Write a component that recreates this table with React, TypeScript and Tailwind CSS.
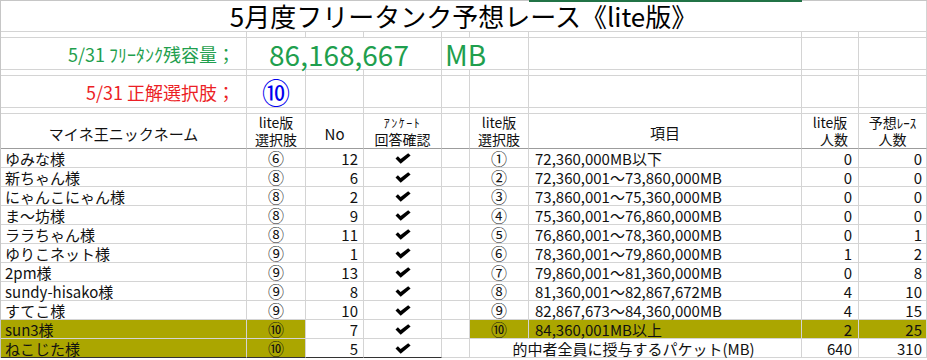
import { twMerge } from 'tailwind-merge';
import type { ReactNode } from 'react';

// Excel-like sheet: 5月度フリータンク予想レース
const FONT = "font-['Noto_Sans_CJK_JP','Noto_Sans_CJK_SC',sans-serif]";
const HL = 'bg-[#aba600]';

function C({ className, children }: { className?: string; children?: ReactNode }) {
  return (
    <div
      className={twMerge(
        'flex items-center overflow-visible whitespace-nowrap border-r border-b border-[#d4d4d4] text-[15px] leading-[19px] text-[#111]',
        className,
      )}
    >
      {children}
    </div>
  );
}

function Check() {
  return (
    <svg width="16" height="11" viewBox="0 0 16 11">
      <path d="M0.5 5.6 L2.9 3.3 L5.6 6.1 L13.2 0.2 L15.6 2.5 L5.7 10.8 Z" fill="#000" />
    </svg>
  );
}

const left: [string, string, string, boolean?][] = [
  ['ゆみな様', '⑥', '12'],
  ['新ちゃん様', '⑧', '6'],
  ['にゃんこにゃん様', '⑧', '2'],
  ['ま〜坊様', '⑧', '9'],
  ['ララちゃん様', '⑧', '11'],
  ['ゆりこネット様', '⑨', '1'],
  ['2pm様', '⑨', '13'],
  ['sundy-hisako様', '⑨', '8'],
  ['すてこ様', '⑨', '10'],
  ['sun3様', '⑩', '7', true],
  ['ねこじた様', '⑩', '5', true],
];

const right: [string, string, string, string, boolean?][] = [
  ['①', '72,360,000MB以下', '0', '0'],
  ['②', '72,360,001～73,860,000MB', '0', '0'],
  ['③', '73,860,001～75,360,000MB', '0', '0'],
  ['④', '75,360,001～76,860,000MB', '0', '0'],
  ['⑤', '76,860,001～78,360,000MB', '0', '1'],
  ['⑥', '78,360,001～79,860,000MB', '1', '2'],
  ['⑦', '79,860,001～81,360,000MB', '0', '8'],
  ['⑧', '81,360,001～82,867,672MB', '4', '10'],
  ['⑨', '82,867,673～84,360,000MB', '4', '15'],
  ['⑩', '84,360,001MB以上', '2', '25', true],
];

function Spacer() {
  return (
    <>
      {Array.from({ length: 9 }).map((_, i) => (
        <C key={i} />
      ))}
    </>
  );
}

const HEAD = 'flex-col justify-end border-b-[#9c9c9c] text-[14px] leading-[17px]';

export default function App() {
  return (
    <div className={`relative h-[360px] w-[927px] overflow-hidden bg-white ${FONT}`}>
      {/* selected cell indicator above the sheet */}
      <div className="absolute left-[529px] top-0 h-[2px] w-[273px] bg-[#217346]" />
      <div className="grid grid-cols-[246px_59px_58px_78px_28px_59px_273px_57px_68px] grid-rows-[31px_6px_32px_6px_32px_6px_35px_repeat(11,19px)] border-t border-l border-[#c6c6c6]">
        {/* title */}
        <C className="col-span-9 justify-center text-[26px] leading-[30px] text-black">
          5月度フリータンク予想レース《lite版》
        </C>
        <Spacer />

        {/* remaining capacity */}
        <C className="justify-end pr-[11px] text-[18px] leading-[24px] text-[#1f9f4e]">5/31 ﾌﾘｰﾀﾝｸ残容量；</C>
        <C className="col-span-3 justify-center pr-[10px] text-[28px] leading-[30px] text-[#1f9f4e]">86,168,667</C>
        <C className="col-span-2 pl-[3px] text-[28px] leading-[30px] text-[#1f9f4e]">MB</C>
        <C />
        <C />
        <C />
        <Spacer />

        {/* correct answer */}
        <C className="justify-end pr-[11px] text-[18px] leading-[24px] text-[#ec1f26]">5/31 正解選択肢；</C>
        <C className="justify-center text-[28px] leading-[30px] text-[#0000ee]">⑩</C>
        <C />
        <C />
        <C />
        <C />
        <C />
        <C />
        <C />
        <Spacer />

        {/* header */}
        <C className="justify-center border-b-[#9c9c9c] pt-[4px]">マイネ王ニックネーム</C>
        <C className={HEAD}>
          <span>lite版</span>
          <span>選択肢</span>
        </C>
        <C className="justify-center border-b-[#9c9c9c] pt-[4px]">No</C>
        <C className={HEAD}>
          <span className="text-[12px] tracking-[1.5px]">ｱﾝｹｰﾄ</span>
          <span>回答確認</span>
        </C>
        <C className="border-b-[#9c9c9c]" />
        <C className={HEAD}>
          <span>lite版</span>
          <span>選択肢</span>
        </C>
        <C className="justify-center border-b-[#9c9c9c] pt-[2px]">項目</C>
        <C className={HEAD}>
          <span>lite版</span>
          <span className="pl-[8px]">人数</span>
        </C>
        <C className={HEAD}>
          <span>
            予想<span className="text-[13px]">ﾚｰｽ</span>
          </span>
          <span>人数</span>
        </C>

        {/* data rows */}
        {left.map(([name, choice, no, hl], i) => {
          const last = i === left.length - 1;
          const lb = last ? 'border-b-[#333]' : '';
          const r = right[i];
          return (
            <div key={name} className="contents">
              <C className={twMerge('pl-[4px]', hl && HL, lb)}>{name}</C>
              <C className={twMerge('justify-center text-[16px]', hl && HL, lb)}>{choice}</C>
              <C className={twMerge('justify-end pr-[5px]', lb)}>{no}</C>
              <C className={twMerge('justify-center', lb)}>
                <Check />
              </C>
              <C />
              {r ? (
                <>
                  <C className={twMerge('justify-center text-[16px]', r[4] && HL)}>{r[0]}</C>
                  <C className={twMerge('pl-[6px]', r[4] && HL)}>{r[1]}</C>
                  <C className={twMerge('justify-end pr-[6px]', r[4] && HL)}>{r[2]}</C>
                  <C className={twMerge('justify-end pr-[4px]', r[4] && HL)}>{r[3]}</C>
                </>
              ) : (
                <>
                  <C className="col-span-2 justify-center pr-[4px]">的中者全員に授与するパケット(MB)</C>
                  <C className="justify-end pr-[6px]">640</C>
                  <C className="justify-end pr-[4px]">310</C>
                </>
              )}
            </div>
          );
        })}
      </div>
    </div>
  );
}
